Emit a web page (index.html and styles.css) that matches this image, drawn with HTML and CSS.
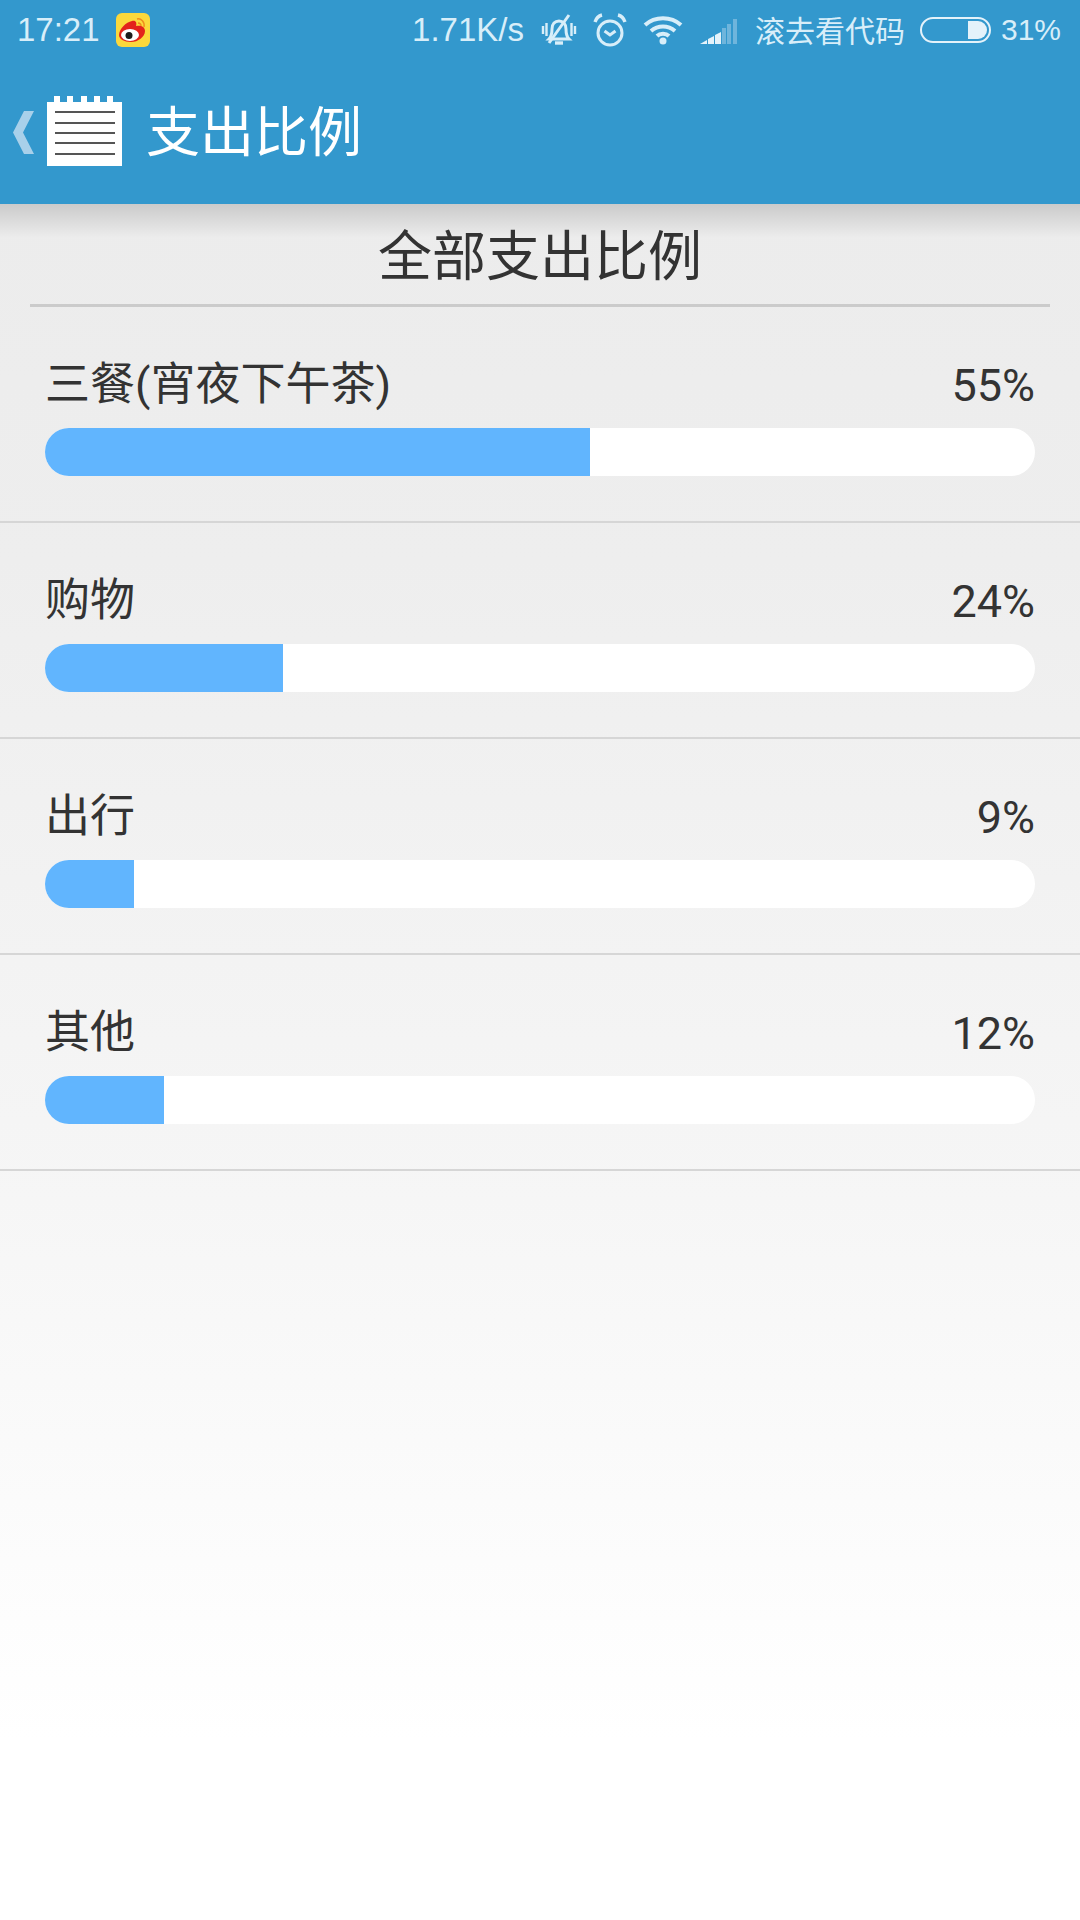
FILE: index.html
```html
<!DOCTYPE html>
<html lang="zh-CN">
<head>
    <meta charset="UTF-8">
    <meta name="viewport" content="width=device-width, initial-scale=1.0">
    <title>支出比例</title>
    <link rel="stylesheet" href="styles.css">
</head>
<body>
    <div class="top">
        <div class="statusbar">
            <div class="status-left">
                <span class="time">17:21</span>
                <svg class="weibo" width="34" height="34" viewBox="0 0 34 34">
                    <rect width="34" height="34" rx="6" fill="#fbd83c"/>
                    <path d="M3 22c0-6 7-13 13-14 4-1 5 2 4 5 4-1 9 0 9 5 0 6-7 11-14 11-7 0-12-3-12-7z" fill="#e3231c"/>
                    <ellipse cx="14" cy="22" rx="9" ry="6" fill="#fff"/>
                    <circle cx="13" cy="22.500" r="3.500" fill="#1c1c1c"/>
                    <path d="M21 6c4-1 8 3 7 8M22 10c2 0 3 1 3 3" fill="none" stroke="#f08c1e" stroke-width="1.500"/>
                </svg>
            </div>
            <div class="status-right">
                <span class="speed">1.71K/s</span>
                <svg class="ic-bell" width="36" height="36" viewBox="0 0 36 36" fill="none" stroke="#d8eef9" stroke-width="3">
                    <path d="M8 27c2-2 3-5 3-10 0-5 3-8 7-8s7 3 7 8c0 5 1 8 3 10z"/>
                    <path d="M14 31h8" stroke-width="3.400"/>
                    <path d="M2 14v8M5.500 11v13M30.500 11v13M34 14v8" stroke-width="2.400"/>
                    <path d="M8 31 28 3" stroke-width="3"/>
                </svg>
                <svg class="ic-alarm" width="34" height="36" viewBox="0 0 34 36" fill="none" stroke="#d8eef9" stroke-width="3">
                    <circle cx="17" cy="21" r="12"/>
                    <path d="M11.500 19l5.500 4 5.500-4"/>
                    <path d="M2 10c1-3 3-6 7-7M32 10c-1-3-3-6-7-7" stroke-width="3.400"/>
                </svg>
                <svg class="ic-wifi" width="40" height="30" viewBox="0 0 40 30" fill="none" stroke="#d8eef9" stroke-width="4">
                    <path d="M2 10c10-9 26-9 36 0M8 16c7-6 17-6 24 0M14 21c3-3 9-3 12 0"/>
                    <circle cx="20" cy="26" r="3.500" fill="#d8eef9" stroke="none"/>
                </svg>
                <svg class="ic-signal" width="38" height="28" viewBox="0 0 38 28">
                    <path d="M0 28l7-4v4zM8 28v-5l6-3v8z" fill="#e4f2fa"/>
                    <path d="M15 28v-9l6-3v12z" fill="#e4f2fa"/>
                    <rect x="22" y="12" width="4" height="16" fill="#6fb5dc"/>
                    <rect x="27" y="8" width="4" height="20" fill="#6fb5dc"/>
                    <rect x="33" y="3" width="4" height="25" fill="#6fb5dc"/>
                </svg>
                <span class="carrier">滚去看代码</span>
                <span class="battery"><span class="battery-level"></span></span>
                <span class="percent">31%</span>
            </div>
        </div>
        <div class="appbar">
            <svg class="back" width="21" height="43" viewBox="0 0 21 43">
                <path d="M21 0H11L0 21.500 11 43h10L10 21.500z" fill="#a8d0ea"/>
            </svg>
            <svg class="note" width="75" height="70" viewBox="0 0 75 70">
                <path d="M7 0h6v6H7zM20 0h6v6h-6zM34 0h6v6h-6zM47 0h6v6h-6zM60 0h6v6h-6z" fill="#fff"/>
                <rect y="6" width="75" height="64" fill="#fff"/>
                <path d="M8 16h60M8 27h60M8 37h60M8 47h60M8 58h60" stroke="#555" stroke-width="2"/>
            </svg>
            <h1 class="app-title">支出比例</h1>
        </div>
    </div>

    <div class="content">
        <h2 class="section-title">全部支出比例</h2>

        <div class="row">
            <div class="row-head"><span class="label">三餐(宵夜下午茶)</span><span class="pct">55%</span></div>
            <div class="track"><div class="fill" style="width: 55%"></div></div>
        </div>
        <div class="row">
            <div class="row-head"><span class="label">购物</span><span class="pct">24%</span></div>
            <div class="track"><div class="fill" style="width: 24%"></div></div>
        </div>
        <div class="row">
            <div class="row-head"><span class="label">出行</span><span class="pct">9%</span></div>
            <div class="track"><div class="fill" style="width: 9%"></div></div>
        </div>
        <div class="row">
            <div class="row-head"><span class="label">其他</span><span class="pct">12%</span></div>
            <div class="track"><div class="fill" style="width: 12%"></div></div>
        </div>
    </div>
</body>
</html>
```

FILE: styles.css
```css
html, body {
    margin: 0;
    padding: 0;
}
body {
    width: 1080px;
    height: 1920px;
    overflow: hidden;
    font-family: Roboto, "Noto Sans CJK SC", sans-serif;
    color: #333;
    background: linear-gradient(#ececec 204px, #eeeeee 560px, #f6f6f6 1200px, #ffffff 1740px);
}
.top {
    position: relative;
    height: 204px;
    background-color: #3398cd;
}
.statusbar {
    height: 60px;
    display: flex;
    justify-content: space-between;
    align-items: center;
    padding: 0 20px 0 17px;
    color: #d8eef9;
    font-family: "Liberation Sans", "Noto Sans CJK SC", sans-serif;
    font-size: 33px;
}
.status-left, .status-right {
    display: flex;
    align-items: center;
}
.weibo {
    margin-left: 16px;
}
.speed {
    margin-right: 17px;
}
.ic-bell {
    margin-right: 16px;
}
.ic-alarm {
    margin-right: 16px;
}
.ic-wifi {
    margin-right: 17px;
}
.ic-signal {
    margin-right: 17px;
}
.carrier {
    font-family: "Noto Sans CJK SC", sans-serif;
    font-size: 30px;
    margin: -3px 15px 0 0;
}
.battery {
    box-sizing: border-box;
    width: 71px;
    height: 26px;
    border: 2px solid #e4f2fa;
    border-radius: 13px;
    display: flex;
    justify-content: flex-end;
    padding: 2px;
    margin-right: 10px;
}
.battery-level {
    width: 19px;
    background-color: #e4f2fa;
    border-radius: 0 9px 9px 0;
}
.percent {
    font-size: 30px;
    margin-right: -1px;
}
.appbar {
    height: 144px;
    display: flex;
    align-items: center;
    padding-left: 13px;
}
.note {
    margin-left: 13px;
    margin-bottom: 2px;
}
.app-title {
    margin: 0 0 7px 24px;
    font-size: 54px;
    font-weight: 400;
    color: #fff;
    font-family: "Noto Sans CJK SC", sans-serif;
}
.content {
    background: linear-gradient(rgba(0, 0, 0, 0.14), rgba(0, 0, 0, 0) 34px);
}
.section-title {
    box-sizing: border-box;
    height: 103px;
    margin: 0 30px;
    border-bottom: 3px solid #cbcbcb;
    font-family: "Noto Sans CJK SC", sans-serif;
    font-size: 54px;
    font-weight: 400;
    line-height: 98px;
    text-align: center;
}
.row {
    box-sizing: border-box;
    height: 216px;
    padding: 0 45px 45px;
    border-bottom: 2px solid #d6d6d6;
    display: flex;
    flex-direction: column;
    justify-content: flex-end;
}
.row-head {
    display: flex;
    justify-content: space-between;
    align-items: center;
    height: 60px;
    margin-bottom: 14px;
    font-size: 45px;
}
.label {
    padding-bottom: 7px;
}
.pct {
    font-size: 45px;
    padding-top: 2px;
}
.track {
    height: 48px;
    border-radius: 24px;
    background-color: #fff;
    overflow: hidden;
}
.fill {
    height: 100%;
    background-color: #61b5fe;
}
```
